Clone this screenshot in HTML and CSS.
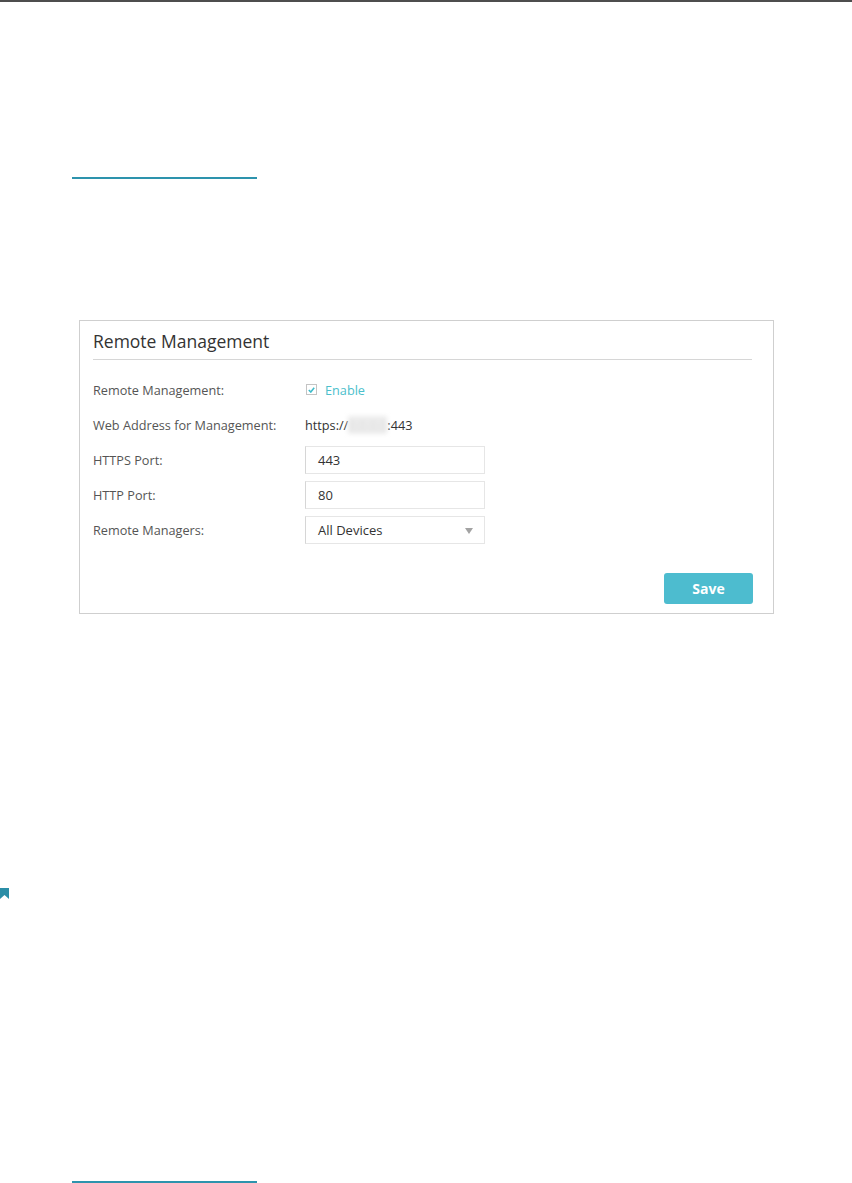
FILE: index.html
```html
<!DOCTYPE html>
<html lang="en">
<head>
    <meta charset="UTF-8">
    <meta name="viewport" content="width=device-width, initial-scale=1.0">
    <title>Remote Management</title>
    <link rel="stylesheet" href="styles.css">
</head>
<body>

<div class="top-rule"></div>
<div class="link-rule"></div>

<div class="panel">
    <h2 class="panel-title">Remote Management</h2>
    <div class="rows">
        <div class="row">
            <span class="label">Remote Management:</span>
            <label class="enable">
                <span class="check">
                    <svg width="7" height="6" viewBox="0 0 7 6"><path d="M0.8 3 L2.8 5 L6.2 0.8" fill="none" stroke="#3fbccb" stroke-width="1.6"/></svg>
                </span>
                Enable
            </label>
        </div>
        <div class="row">
            <span class="label">Web Address for Management:</span>
            <span class="value">https://<span class="blur">0.0.0.0</span>:443</span>
        </div>
        <div class="row">
            <span class="label">HTTPS Port:</span>
            <div class="field">443</div>
        </div>
        <div class="row">
            <span class="label">HTTP Port:</span>
            <div class="field">80</div>
        </div>
        <div class="row">
            <span class="label">Remote Managers:</span>
            <div class="field select">All Devices<span class="arrow"></span></div>
        </div>
    </div>
    <div class="actions">
        <button class="save">Save</button>
    </div>
</div>

<div class="mark">
    <svg width="9" height="11" viewBox="0 0 9 11"><polygon points="0,0 9,0 9,11 4.5,7 0,11" fill="#2b8ea7"/></svg>
</div>

<div class="link-rule bottom"></div>

</body>
</html>
```

FILE: styles.css
```css
body {
    margin: 0;
    background: #fff;
    font-family: "Open Sans", "Noto Sans", sans-serif;
    color: #444;
}
.top-rule {
    height: 2px;
    background: #4d4d4d;
}
.link-rule {
    width: 185px;
    height: 2px;
    margin: 175px 0 0 72px;
    background: #2d93ad;
}
.link-rule.bottom {
    margin-top: 282px;
}
.panel {
    box-sizing: border-box;
    width: 695px;
    height: 294px;
    margin: 141px 0 0 79px;
    padding: 0 21px 0 13px;
    border: 1px solid #cfcfcf;
}
.panel-title {
    margin: 0;
    padding: 8px 0 6px;
    font-size: 17.5px;
    line-height: 24px;
    font-weight: normal;
    color: #333;
    border-bottom: 1px solid #d6d6d6;
}
.rows {
    margin-top: 12px;
}
.row {
    display: flex;
    align-items: center;
    height: 35px;
    font-size: 12.7px;
}
.label {
    width: 212px;
    color: #555;
}
.value {
    color: #333;
}
.blur {
    color: #ddd;
    background: #ececec;
    filter: blur(2px);
}
.enable {
    display: flex;
    align-items: center;
    gap: 8px;
    color: #4bc0cc;
}
.check {
    box-sizing: border-box;
    width: 11px;
    height: 11px;
    margin-left: 1px;
    border: 1px solid #c4c4c4;
    display: flex;
    align-items: center;
    justify-content: center;
}
.field {
    box-sizing: border-box;
    position: relative;
    width: 180px;
    height: 28px;
    padding-left: 12px;
    line-height: 26px;
    border: 1px solid #e6e6e6;
    border-left-color: #d6d6d6;
    color: #333;
    font-size: 13px;
}
.arrow {
    position: absolute;
    right: 11px;
    top: 11px;
    border-left: 4px solid transparent;
    border-right: 4px solid transparent;
    border-top: 6px solid #a3a3a3;
}
.actions {
    display: flex;
    justify-content: flex-end;
    margin-top: 26px;
}
.save {
    width: 89px;
    height: 31px;
    margin-right: -1px;
    border: none;
    border-radius: 3px;
    background: #4dbccf;
    color: #fff;
    font-family: "Open Sans", "Noto Sans", sans-serif;
    font-size: 14px;
    font-weight: bold;
}
.mark {
    height: 11px;
    margin-top: 274px;
    line-height: 0;
}
```
